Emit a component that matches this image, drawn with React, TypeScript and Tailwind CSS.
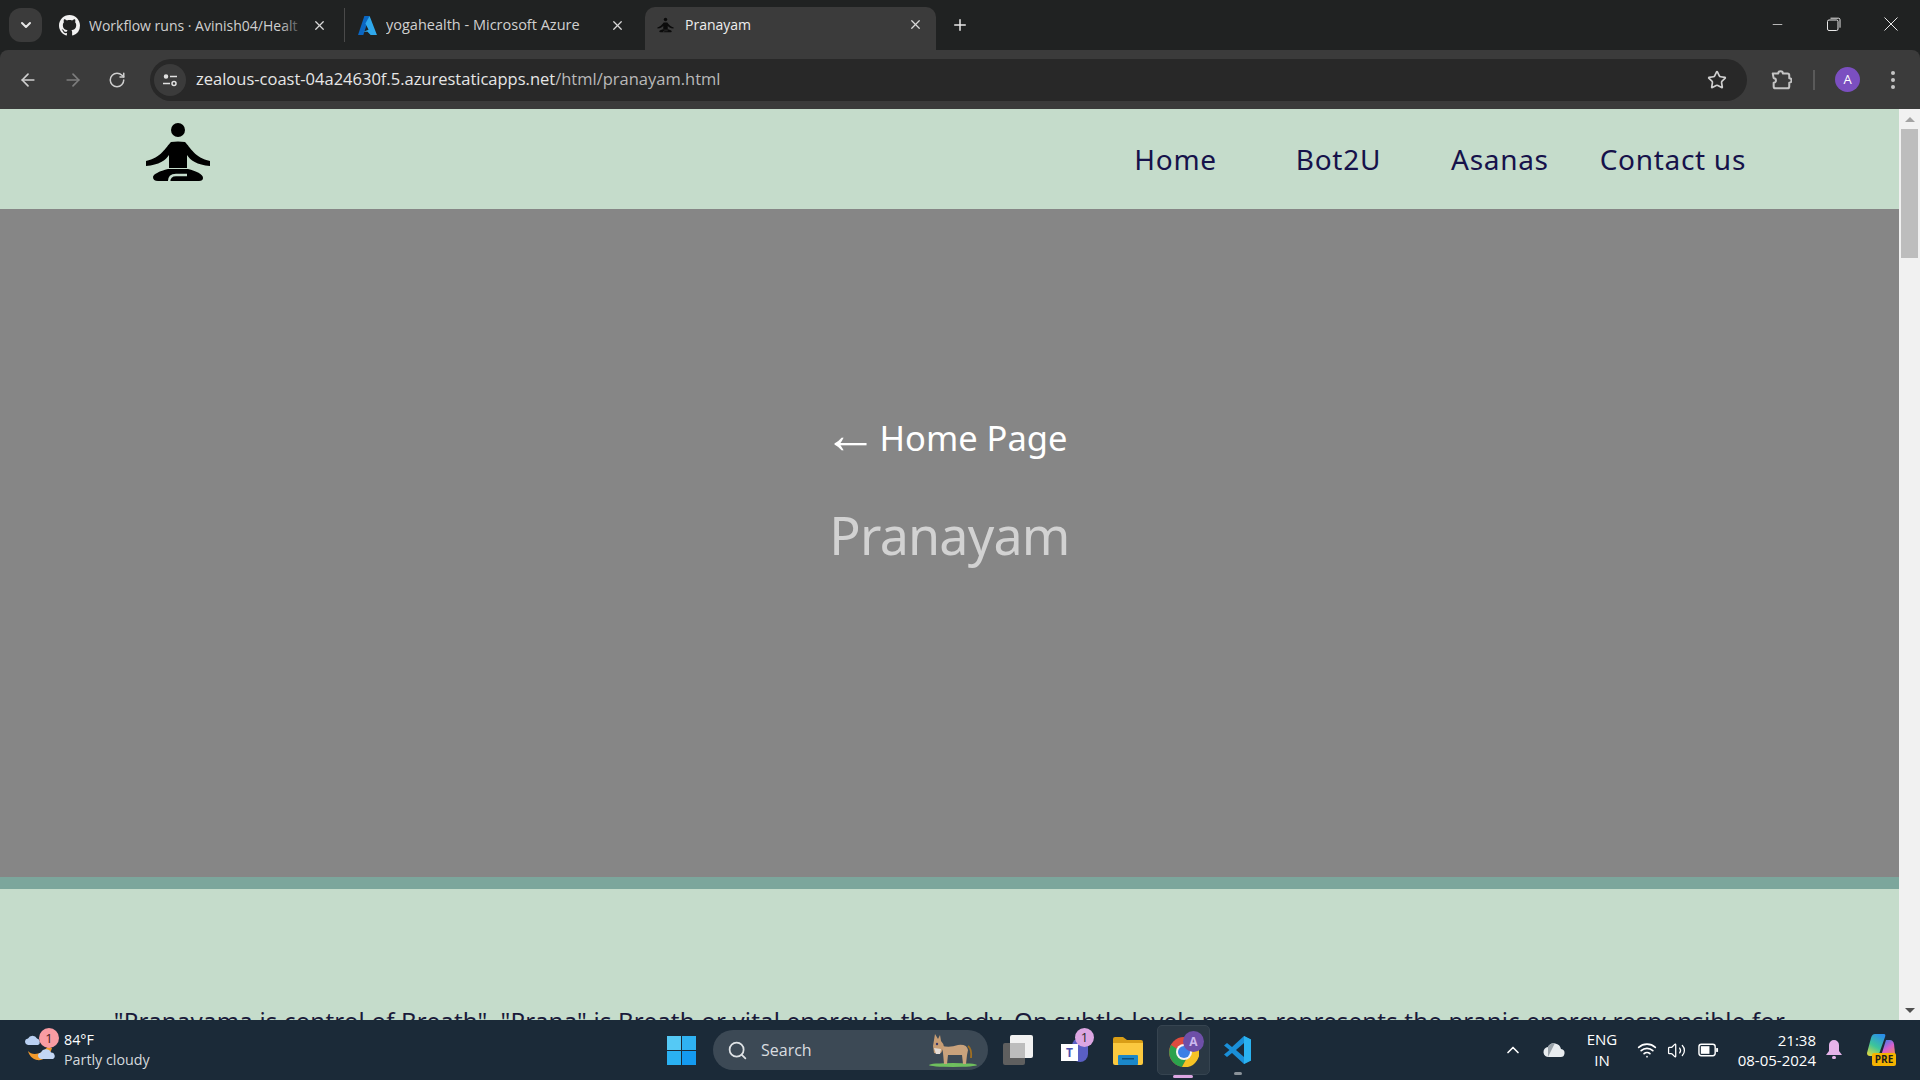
import { ArrowLeft, ArrowRight, ChevronDown, ChevronUp, Minus, Plus, RotateCw, Search, Star, Volume2, Wifi, X } from "lucide-react";

function YogaLogo({ className, fill = "#000000", notch = "#c5dccb" }: { className: string; fill?: string; notch?: string }) {
    return (
        <svg viewBox="144 122 68 60" className={className}>
            <circle cx="178" cy="130" r="7" fill={fill} />
            <path fill={fill} d="M171 142Q178 141 185 142C190 147 195 158 210 161L210 166C197 165 190 160 187 155L187 168L169 168L169 155C166 160 159 165 146 166L146 161C161 158 166 147 171 142Z" />
            <path fill={fill} d="M168 169H188C196 171 203 174 203 178Q203 181 199 181H158Q153 181 153 177C153 174 160 171 168 169Z" />
            <path fill="none" stroke={notch} strokeWidth="2.5" d="M169 182Q169 175 176 175H187" />
        </svg>
    );
}

function TabBar() {
    return (
        <div className="h-[50px] bg-[#202222] flex items-start shrink-0 pl-[9px]">
            <div className="w-[33px] h-[34px] mt-[8px] bg-[#3b3b3b] rounded-[12px] flex items-center justify-center">
                <ChevronDown size={16} strokeWidth={3} className="text-[#e8e8e8]" />
            </div>
            <div className="w-[298px] h-[34px] mt-[8px] ml-[5px] flex items-center pl-[12px] pr-[17px] border-r border-[#4a4a4a]">
                <svg viewBox="0 0 16 16" className="w-[21px] h-[21px] shrink-0" fill="#f2f2f2"><path d="M8 0C3.58 0 0 3.58 0 8c0 3.54 2.29 6.53 5.47 7.59.4.07.55-.17.55-.38 0-.19-.01-.82-.01-1.49-2.01.37-2.53-.49-2.69-.94-.09-.23-.48-.94-.82-1.13-.28-.15-.68-.52-.01-.53.63-.01 1.08.58 1.23.82.72 1.21 1.87.87 2.33.66.07-.52.28-.87.51-1.07-1.78-.2-3.64-.89-3.64-3.95 0-.87.31-1.59.82-2.15-.08-.2-.36-1.02.08-2.12 0 0 .67-.21 2.2.82.64-.18 1.32-.27 2-.27s1.36.09 2 .27c1.53-1.04 2.2-.82 2.2-.82.44 1.1.16 1.92.08 2.12.51.56.82 1.27.82 2.15 0 3.07-1.87 3.75-3.65 3.95.29.25.54.73.54 1.48 0 1.07-.01 1.93-.01 2.2 0 .21.15.46.55.38A8.01 8.01 0 0 0 16 8c0-4.42-3.58-8-8-8z" /></svg>
                <div className="ml-[9px] flex-1 min-w-0 relative overflow-hidden">
                    <span className="text-[14px] text-[#d0d0d0] whitespace-nowrap">Workflow runs · Avinish04/Healt</span>
                    <div className="absolute inset-y-0 right-0 w-[26px] bg-gradient-to-r from-transparent to-[#202222]" />
                </div>
                <X size={15} className="text-[#d8d8d8] shrink-0 ml-[6px]" />
            </div>
            <div className="w-[300px] h-[34px] mt-[8px] flex items-center pl-[12px] pr-[20px]">
                <svg viewBox="0 0 20 20" className="w-[21px] h-[21px] shrink-0"><path d="M7 1h5L6 19H1z" fill="#0a66c2" /><path d="M12 1l7 18h-6l-3-3H6l5-2-3-6z" fill="#2fa8ec" /></svg>
                <span className="ml-[8px] flex-1 text-[14.500px] text-[#d0d0d0] whitespace-nowrap overflow-hidden">yogahealth - Microsoft Azure</span>
                <X size={15} className="text-[#d8d8d8] shrink-0" />
            </div>
            <div className="w-[291px] h-[43px] mt-[7px] pb-[8px] bg-[#3b3b3b] rounded-t-[10px] flex items-center pl-[12px] pr-[13px]">
                <YogaLogo className="w-[17px] h-[16px] shrink-0" fill="#0b0b0b" notch="#3b3b3b" />
                <span className="ml-[11px] flex-1 text-[14px] text-[#eeeeee] whitespace-nowrap">Pranayam</span>
                <X size={15} className="text-[#d8d8d8] shrink-0" />
            </div>
            <div className="h-[36px] mt-[7px] ml-[15px] flex items-center">
                <Plus size={18} strokeWidth={2} className="text-[#e8e8e8]" />
            </div>
            <div className="flex-1" />
            <div className="flex items-center h-[50px] text-[#e8e8e8]">
                <Minus size={15} strokeWidth={1.2} className="mr-[42px] mt-[-2px]" />
                <svg viewBox="0 0 14 14" className="w-[14px] h-[14px] mr-[43px] mt-[-2px]" fill="none" stroke="#e8e8e8" strokeWidth="1"><rect x="0.5" y="3" width="10.500" height="10.500" rx="1.500" /><path d="M3.500 1.200h8a1.500 1.500 0 0 1 1.500 1.500v8" /></svg>
                <svg viewBox="0 0 14 14" className="w-[14px] h-[14px] mr-[22px] mt-[-2px]" stroke="#e8e8e8" strokeWidth="1"><path d="M0.500 0.500l13 13M13.500 0.500l-13 13" /></svg>
            </div>
        </div>
    );
}

function Toolbar() {
    return (
        <div className="h-[59px] bg-[#3b3b3b] rounded-t-[8px] flex items-center shrink-0">
            <ArrowLeft size={20} strokeWidth={2} className="ml-[18px] text-[#cfcfcf]" />
            <ArrowRight size={20} strokeWidth={2} className="ml-[25px] text-[#7d7d7d]" />
            <RotateCw size={18} strokeWidth={2} className="ml-[25px] text-[#cfcfcf]" />
            <div className="ml-[24px] w-[1597px] h-[42px] rounded-full bg-[#282828] flex items-center pl-[4px] pr-[20px]">
                <div className="w-[32px] h-[32px] rounded-full bg-[#3b3b3b] flex items-center justify-center">
                    <svg viewBox="0 0 16 16" className="w-[16px] h-[16px]" fill="none" stroke="#e0e0e0" strokeWidth="1.500">
                        <circle cx="4" cy="4.500" r="1.500" fill="#e0e0e0" />
                        <path d="M8 4.500h7M1 11.500h7" />
                        <circle cx="12" cy="11.500" r="2" />
                    </svg>
                </div>
                <span className="ml-[10px] font-['Open_Sans',sans-serif] text-[16.500px] text-[#e6e6e6] whitespace-nowrap">zealous-coast-04a24630f.5.azurestaticapps.net<span className="text-[#b9b9b9]">/html/pranayam.html</span></span>
                <div className="flex-1" />
                <Star size={20} strokeWidth={2} className="text-[#d0d0d0]" />
            </div>
            <svg viewBox="0 0 24 24" className="ml-[23px] w-[22px] h-[22px]" fill="none" stroke="#c4c4c4" strokeWidth="2.200" strokeLinejoin="round">
                <path d="M3 5h6a2.500 2.500 0 0 1 5 0h5a2 2 0 0 1 2 2v3a2.500 2.500 0 0 1 0 5v4a2 2 0 0 1-2 2H6a2 2 0 0 1-2-2v-4a2.500 2.500 0 0 0 0-5z" />
            </svg>
            <div className="ml-[21px] w-[2px] h-[20px] bg-[#5a5a5a]" />
            <div className="ml-[20px] w-[25px] h-[25px] rounded-full bg-[#7b4fc0] flex items-center justify-center text-[13px] text-white">A</div>
            <div className="ml-[31px] flex flex-col gap-[3px]">
                <div className="w-[4px] h-[4px] rounded-full bg-[#c4c4c4]" />
                <div className="w-[4px] h-[4px] rounded-full bg-[#c4c4c4]" />
                <div className="w-[4px] h-[4px] rounded-full bg-[#c4c4c4]" />
            </div>
        </div>
    );
}

function Page() {
    return (
        <div className="flex-1 min-w-0 bg-[#c5dccb] font-['Noto_Sans',sans-serif] overflow-hidden">
            <nav className="h-[100px] flex items-center">
                <YogaLogo className="ml-[144px] mt-[-14px] w-[68px] h-[60px]" />
                <div className="flex-1" />
                <a className="text-[28px] tracking-[0.700px] text-[#16124a]">Home</a>
                <a className="ml-[79px] text-[28px] tracking-[0.700px] text-[#16124a]">Bot2U</a>
                <a className="ml-[70px] text-[28px] tracking-[0.700px] text-[#16124a]">Asanas</a>
                <a className="ml-[51px] mr-[153px] text-[28px] tracking-[0.700px] text-[#16124a] whitespace-nowrap">Contact us</a>
            </nav>
            <section className="h-[668px] bg-[#868686] flex flex-col items-center pt-[205px]">
                <a className="text-[34.500px] leading-[48px] text-white flex items-center pr-[8px]">
                    <span className="font-['Liberation_Sans',sans-serif] text-[54px] leading-[48px] mr-[2px] mt-[-8px]">←</span>
                    <span>Home Page</span>
                </a>
                <h1 className="mt-[35px] text-[52px] leading-[76px] tracking-[-0.800px] text-[#d2d2d2]">Pranayam</h1>
            </section>
            <div className="h-[12px] bg-[#7ca69c]" />
            <p className="mt-[114px] text-center text-[24px] leading-[36px] tracking-[0.200px] text-[#1a1a3a] whitespace-nowrap">"Pranayama is control of Breath". "Prana" is Breath or vital energy in the body. On subtle levels prana represents the pranic energy responsible for</p>
        </div>
    );
}

function Scrollbar() {
    return (
        <div className="w-[21px] bg-[#f1f1f1] flex flex-col items-center shrink-0">
            <div className="h-[20px] flex items-center justify-center">
                <div className="w-0 h-0 border-x-[5px] border-x-transparent border-b-[5px] border-b-[#a3a3a3]" />
            </div>
            <div className="w-[17px] h-[129px] bg-[#bdbdbd]" />
            <div className="flex-1" />
            <div className="h-[20px] flex items-center justify-center">
                <div className="w-0 h-0 border-x-[5px] border-x-transparent border-t-[5px] border-t-[#505050]" />
            </div>
        </div>
    );
}

function Taskbar() {
    return (
        <div className="h-[60px] bg-[#1b2a38] flex items-center shrink-0 font-['Open_Sans',sans-serif] text-white">
            <div className="w-[667px] flex items-center shrink-0 pl-[24px]">
                <div className="w-[36px] h-[40px] relative shrink-0">
                    <svg viewBox="0 0 36 40" className="w-[36px] h-[40px]">
                        <path d="M1 12a3.500 3.500 0 0 1 3-3.500 5 5 0 0 1 9 0 3.500 3.500 0 0 1 1 6.500H4a3.500 3.500 0 0 1-3-3z" fill="#b9d0f2" />
                        <path d="M4 21c4 5 14 4 20-5l4 2c-2 8-9 13-15 12-5-1-8-5-9-9z" fill="#f39a2b" />
                        <path d="M14 26a3.500 3.500 0 0 1 3-3.500 5.500 5.500 0 0 1 10 0 3.500 3.500 0 0 1 2 6.500H17a3.500 3.500 0 0 1-3-3z" fill="#c3d6f4" />
                    </svg>
                    <div className="absolute top-[-2px] left-[15px] w-[20px] h-[20px] rounded-full bg-[#f99ca3] text-[#4a1a1a] text-[13px] leading-[20px] text-center">1</div>
                </div>
                <div className="ml-[4px] flex flex-col text-[14.300px] leading-[20px]">
                    <span>84°F</span>
                    <span className="text-[#d5d9dd]">Partly cloudy</span>
                </div>
            </div>
            <div className="w-[29px] h-[29px] grid grid-cols-2 gap-[1px] shrink-0">
                <div className="bg-[#55c9f5]" />
                <div className="bg-[#2fb2f2]" />
                <div className="bg-[#2ab1f2]" />
                <div className="bg-[#149af0]" />
            </div>
            <div className="ml-[17px] w-[275px] h-[40px] rounded-full bg-[#3c4955] flex items-center pl-[14px] relative shrink-0">
                <Search size={21} className="text-[#dfe3e6]" />
                <span className="ml-[13px] text-[16px] text-[#d9dde0]">Search</span>
                <svg viewBox="0 0 50 34" className="absolute right-[10px] top-[3px] w-[50px] h-[34px]">
                    <ellipse cx="25" cy="32" rx="24" ry="2" fill="#6fbf5e" />
                    <path d="M14 13q8 2 16-1 9-1 10 5l-1 5-1 9h-3l-1-9H20l-1 9h-3l-1-11z" fill="#c9a27c" />
                    <path d="M7 1l3 5 2-4 1 6q3 3 3 6l-3 6-3 1-4-1-1-7z" fill="#c79d74" />
                    <path d="M6 15l7 1-1 5-4 0z" fill="#e4dcd6" />
                    <circle cx="9" cy="11" r="1.200" fill="#3a3a6a" />
                    <path d="M40 13q4 3 3 12" fill="none" stroke="#a06f22" strokeWidth="1.800" />
                </svg>
            </div>
            <div className="ml-[15px] w-[32px] h-[32px] relative shrink-0">
                <div className="absolute left-[0px] top-[9px] w-[22px] h-[22px] rounded-[2px] bg-[#5f5f5f]" />
                <div className="absolute left-[7px] top-[1px] w-[23px] h-[23px] rounded-[2px] bg-[#f1f1f1]" />
                <div className="absolute left-[7px] top-[9px] w-[15px] h-[15px] bg-[#bdbdbd]" />
            </div>
            <div className="ml-[26px] w-[33px] h-[40px] relative shrink-0 mt-[-4px]">
                <div className="absolute left-[11px] top-[10px] w-[16px] h-[24px] rounded-[8px] bg-[#5a5fc4]" />
                <div className="absolute left-0 top-[16px] w-[17px] h-[17px] bg-white text-[#4c50b0] text-[12px] leading-[17px] text-center font-bold">T</div>
                <div className="absolute left-[14px] top-0 w-[19px] h-[19px] rounded-full bg-[#dca6e2] text-[#2a2a2a] text-[13px] leading-[19px] text-center">1</div>
            </div>
            <svg viewBox="0 0 30 28" className="ml-[19px] w-[30px] h-[28px] shrink-0 mt-[2px]">
                <path d="M0 2a2 2 0 0 1 2-2h8l4 3h14a2 2 0 0 1 2 2v5H0z" fill="#d99e16" />
                <path d="M0 6h30v20a2 2 0 0 1-2 2H2a2 2 0 0 1-2-2z" fill="#fbc93f" />
                <rect x="5" y="18" width="20" height="10" rx="1" fill="#1b87c9" />
                <rect x="9" y="21" width="12" height="1.500" fill="#0d4f7c" />
            </svg>
            <div className="ml-[14px] w-[53px] h-[50px] rounded-[5px] bg-[#2a3844] border border-[#364450] relative shrink-0">
                <svg viewBox="0 0 30 30" className="absolute left-[11px] top-[11px] w-[30px] h-[30px]">
                    <circle cx="15" cy="15" r="15" fill="#de4b3e" />
                    <path d="M2 8a15 15 0 0 0 11 22l6-11z" fill="#2ba24c" />
                    <path d="M28 7a15 15 0 0 1-15 23l6-11 4-12z" fill="#f7c325" />
                    <path d="M15 8h13a15 15 0 0 1 2 7h-5z" fill="#f7c325" />
                    <circle cx="15" cy="15" r="8" fill="#f4f4f4" />
                    <circle cx="15" cy="15" r="6" fill="#3b7fe6" />
                </svg>
                <div className="absolute left-[25px] top-[5px] w-[21px] h-[21px] rounded-full bg-[#6e4fa8] text-[#ccb9ef] text-[12px] leading-[21px] text-center font-bold">A</div>
                <div className="absolute left-[15px] bottom-[-4px] w-[20px] h-[3px] rounded-full bg-[#dca6e2]" />
            </div>
            <div className="ml-[13px] w-[30px] h-[30px] relative shrink-0">
                <svg viewBox="0 0 30 30" className="w-[30px] h-[30px]">
                    <path d="M21 1l7 3.500v21L21 29 9 18l-5 4-3-2.500 5.500-4.500L1 10.500 4 8l5 4z" fill="#1a8fd8" />
                    <path d="M21 1l7 3.500v21L21 29z" fill="#2ab2f0" />
                    <path d="M21 8v14l-8-7z" fill="#1b2a38" />
                </svg>
                <div className="absolute left-[11px] bottom-[-10px] w-[8px] h-[3px] rounded-full bg-[#8a9299]" />
            </div>
            <div className="flex-1" />
            <ChevronUp size={20} strokeWidth={2} />
            <svg viewBox="0 0 22 16" className="ml-[20px] w-[22px] h-[16px]"><path d="M6 15a5 5 0 0 1-1-10 7 7 0 0 1 13 2 4 4 0 0 1-1 8z" fill="#e8ecef" /><path d="M5 5a7 7 0 0 1 7-4L5 15z" fill="#9aa3aa" /></svg>
            <div className="ml-[17px] w-[40px] text-center text-[15px] leading-[21px]">ENG<br />IN</div>
            <Wifi size={20} strokeWidth={2} className="ml-[15px]" />
            <Volume2 size={19} strokeWidth={1.600} className="ml-[10px]" />
            <svg viewBox="0 0 22 14" className="ml-[12px] w-[21px] h-[14px]"><rect x="1" y="1" width="17" height="12" rx="2.500" fill="none" stroke="#fff" strokeWidth="1.500" /><rect x="3" y="3" width="9" height="8" fill="#fff" /><rect x="19" y="5" width="2" height="4" fill="#fff" /></svg>
            <div className="ml-[5px] w-[92px] text-right text-[15px] leading-[20px] whitespace-nowrap">21:38<br />08-05-2024</div>
            <svg viewBox="0 0 16 20" className="ml-[10px] w-[16px] h-[20px]"><path d="M8 0a5 5 0 0 1 5 5v6l3 4H0l3-4V5a5 5 0 0 1 5-5z" fill="#e6b3ea" /><rect x="6" y="16" width="4" height="3" rx="1.500" fill="#e6b3ea" /></svg>
            <div className="ml-[24px] mr-[24px] w-[30px] h-[36px] relative">
                <svg viewBox="0 0 30 28" className="w-[30px] h-[28px]">
                    <defs>
                        <linearGradient id="copilotLeft" x1="0.700" y1="0" x2="0.200" y2="1">
                            <stop offset="0" stopColor="#2b8fe8" />
                            <stop offset="0.550" stopColor="#3cc59a" />
                            <stop offset="1" stopColor="#d8d845" />
                        </linearGradient>
                        <linearGradient id="copilotRight" x1="0.200" y1="0" x2="0.800" y2="1">
                            <stop offset="0" stopColor="#3a7fe8" />
                            <stop offset="0.500" stopColor="#d65fd0" />
                            <stop offset="1" stopColor="#f08a5a" />
                        </linearGradient>
                    </defs>
                    <path d="M9 2h9q2 0 1 3l-6 17q-1 2-3 2H4q-3 0-3-3l4-15q1-4 4-4z" fill="url(#copilotLeft)" />
                    <path d="M20 8h4q3 0 4 4l1 9q0 3-3 3H15z" fill="url(#copilotRight)" />
                </svg>
                <div className="absolute left-[6px] top-[21px] w-[24px] h-[13px] rounded-[2px] bg-[#f5b301] text-[#1b1b1b] text-[10px] leading-[13px] text-center font-bold">PRE</div>
            </div>
        </div>
    );
}

export default function App() {
    return (
        <div className="w-[1920px] h-screen flex flex-col overflow-hidden bg-[#202222] font-['Open_Sans',sans-serif]">
            <TabBar />
            <Toolbar />
            <div className="flex-1 min-h-0 flex">
                <Page />
                <Scrollbar />
            </div>
            <Taskbar />
        </div>
    );
}
